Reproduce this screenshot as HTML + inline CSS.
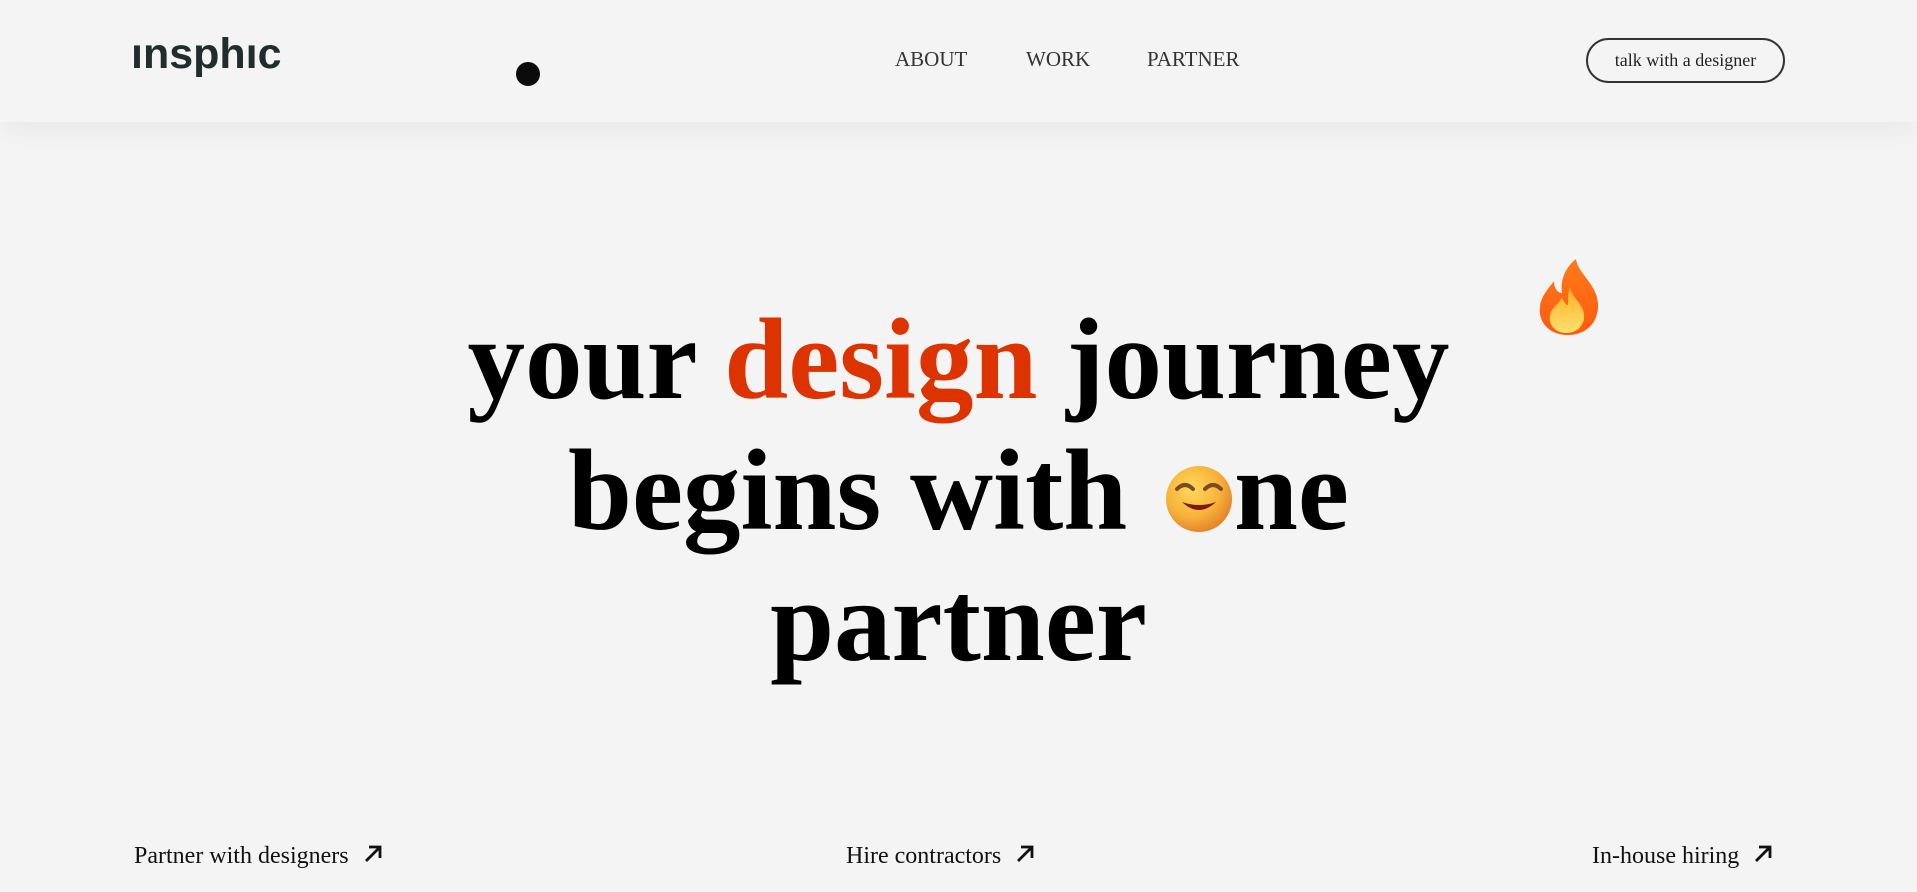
<!DOCTYPE html>
<html><head><meta charset="utf-8"><style>
*{margin:0;padding:0;box-sizing:border-box}
html,body{width:1917px;height:892px;overflow:hidden;background:#f4f4f4;font-family:"Liberation Serif",serif;color:#111}
.hdr{position:absolute;left:0;top:0;width:1917px;height:122px;background:#f4f4f4;box-shadow:0 6px 30px rgba(0,0,0,0.06);z-index:2}
.logo{position:absolute;left:131px;top:30px;font-family:"Liberation Sans",sans-serif;font-weight:bold;font-size:43px;color:#1f2d2d;letter-spacing:0px}
.dot{position:absolute;left:516px;top:62px;width:24px;height:24px;border-radius:50%;background:#0b0b0b}
.nav{position:absolute;top:47px;font-size:21px;color:#333}
.btn{position:absolute;left:1586px;top:38px;width:199px;height:45px;border:2px solid #333;border-radius:23px;font-size:18px;text-align:center;line-height:41px;color:#222}
.hero{position:absolute;left:0;top:294px;width:1917px;text-align:center;font-weight:bold;font-size:115px;line-height:131px;color:#000}
.red{color:#dd3300}
.smile{display:inline-block;width:66px;height:69px;vertical-align:-4px;margin-left:10px;margin-right:2px}
.links{position:absolute;top:843px;font-size:24px;color:#111}
.links svg{vertical-align:-1px;margin-left:14px}
</style></head><body>
<div class="hdr">
<div class="logo">ınsphıc</div>
<div class="dot"></div>
<div class="nav" style="left:895px">ABOUT</div>
<div class="nav" style="left:1026px">WORK</div>
<div class="nav" style="left:1147px">PARTNER</div>
<div class="btn">talk with a designer</div>
</div>
<div class="hero">your <span class="red">design</span> journey<br>begins with <svg class="smile" viewBox="0 0 66 69"><defs><radialGradient id="g" cx="40%" cy="35%" r="70%"><stop offset="0" stop-color="#ffd95a"/><stop offset="0.6" stop-color="#f7b23a"/><stop offset="1" stop-color="#e27d2a"/></radialGradient></defs><circle cx="33" cy="35" r="33" fill="url(#g)"/><path d="M11 25 q8 -8 16 0" stroke="#7a4a2a" stroke-width="4" fill="none" stroke-linecap="round"/><path d="M39 25 q8 -8 16 0" stroke="#7a4a2a" stroke-width="4" fill="none" stroke-linecap="round"/><path d="M16 38 q17 16 34 0 q-17 6 -34 0z" fill="#7a1a10"/></svg>ne<br>partner</div>
<svg style="position:absolute;left:1538px;top:257px" width="62" height="78" viewBox="0 0 62 78"><defs><linearGradient id="f" x1="0" y1="0" x2="0" y2="1"><stop offset="0" stop-color="#ff7a1a"/><stop offset="1" stop-color="#ff5a10"/></linearGradient><linearGradient id="f2" x1="0" y1="0" x2="0" y2="1"><stop offset="0" stop-color="#ffb020"/><stop offset="1" stop-color="#ffe070"/></linearGradient></defs><path d="M38 2 C40 18 62 28 60 52 C58 70 44 78 30 78 C12 78 0 66 2 50 C3 38 12 30 16 24 C16 32 20 36 24 36 C22 22 28 10 38 2Z" fill="url(#f)"/><path d="M32 30 C34 42 48 48 46 62 C44 72 36 76 28 76 C18 76 10 68 12 58 C14 50 22 46 24 40 C26 46 28 48 30 48 C30 42 30 36 32 30Z" fill="url(#f2)"/></svg>
<div class="links" style="left:134px">Partner with designers<svg width="20" height="20" viewBox="0 0 20 20"><path d="M3 17 L17 3 M6 3 H17 V14" stroke="#111" stroke-width="2.8" fill="none"/></svg></div>
<div class="links" style="left:846px">Hire contractors<svg width="20" height="20" viewBox="0 0 20 20"><path d="M3 17 L17 3 M6 3 H17 V14" stroke="#111" stroke-width="2.8" fill="none"/></svg></div>
<div class="links" style="left:1592px">In-house hiring<svg width="20" height="20" viewBox="0 0 20 20"><path d="M3 17 L17 3 M6 3 H17 V14" stroke="#111" stroke-width="2.8" fill="none"/></svg></div>
</body></html>
